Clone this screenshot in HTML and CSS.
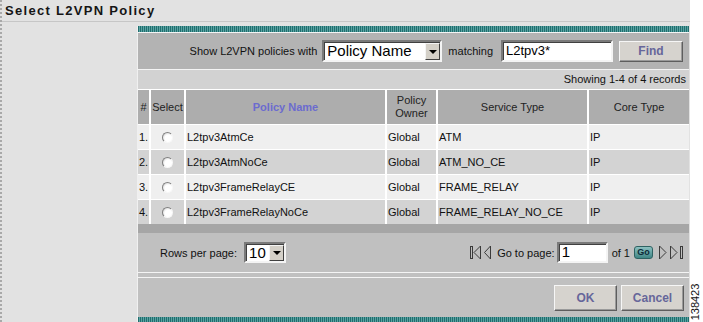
FILE: index.html
```html
<!DOCTYPE html>
<html>
<head>
<meta charset="utf-8">
<title>Select L2VPN Policy</title>
<link rel="stylesheet" href="styles.css">
</head>
<body>
<div class="page">
  <div class="title">Select L2VPN Policy</div>
  <div class="content">
    <div class="sidebar"></div>
    <div class="panel">
      <div class="teal"></div>
      <div class="filter">
        <span class="lbl">Show L2VPN policies with</span>
        <div class="select sel-field"><span class="sel-text">Policy Name</span><span class="sel-btn"><span class="tri"></span></span></div>
        <span class="lbl match">matching</span>
        <div class="input in-match">L2tpv3*</div>
        <div class="btn btn-find">Find</div>
      </div>
      <div class="showing">Showing 1-4 of 4 records</div>
      <table class="grid">
        <colgroup>
          <col class="c-num"><col class="c-sel"><col class="c-name"><col class="c-owner"><col class="c-svc"><col class="c-core">
        </colgroup>
        <thead>
          <tr>
            <th>#</th>
            <th>Select</th>
            <th><span class="sort">Policy Name</span></th>
            <th>Policy<br>Owner</th>
            <th>Service Type</th>
            <th>Core Type</th>
          </tr>
        </thead>
        <tbody>
          <tr class="light"><td>1.</td><td class="ctr"><span class="radio"></span></td><td>L2tpv3AtmCe</td><td>Global</td><td>ATM</td><td>IP</td></tr>
          <tr class="dark"><td>2.</td><td class="ctr"><span class="radio"></span></td><td>L2tpv3AtmNoCe</td><td>Global</td><td>ATM_NO_CE</td><td>IP</td></tr>
          <tr class="light"><td>3.</td><td class="ctr"><span class="radio"></span></td><td>L2tpv3FrameRelayCE</td><td>Global</td><td>FRAME_RELAY</td><td>IP</td></tr>
          <tr class="dark"><td>4.</td><td class="ctr"><span class="radio"></span></td><td>L2tpv3FrameRelayNoCe</td><td>Global</td><td>FRAME_RELAY_NO_CE</td><td>IP</td></tr>
        </tbody>
      </table>
      <div class="grid-foot"></div>
      <div class="pager">
        <div class="rows">
          <span class="lbl">Rows per page:</span>
          <div class="select sel-rows"><span class="sel-text">10</span><span class="sel-btn"><span class="tri"></span></span></div>
        </div>
        <div class="nav">
          <svg class="ico ico-first" width="11" height="15" viewBox="0 0 11 15"><rect x="0.5" y="1.5" width="2" height="12" fill="none" stroke="#3a3a3a"/><path d="M10.5 1 L4 7.5 L10.5 14 Z" fill="none" stroke="#3a3a3a"/></svg>
          <svg class="ico ico-prev" width="7" height="15" viewBox="0 0 7 15"><path d="M6.5 1 L0.5 7.5 L6.5 14 Z" fill="none" stroke="#3a3a3a"/></svg>
          <span class="lbl goto">Go to page:</span>
          <div class="input in-page">1</div>
          <span class="lbl of">of 1</span>
          <span class="go">Go</span>
          <svg class="ico ico-next" width="8" height="15" viewBox="0 0 8 15"><path d="M0.5 1 L7 7.5 L0.5 14 Z" fill="none" stroke="#3a3a3a"/></svg>
          <svg class="ico ico-last" width="14" height="15" viewBox="0 0 14 15"><path d="M0.5 1 L7 7.5 L0.5 14 Z" fill="none" stroke="#3a3a3a"/><rect x="10.5" y="1.5" width="2" height="12" fill="none" stroke="#3a3a3a"/></svg>
        </div>
      </div>
      <div class="actions">
        <div class="btn btn-act">OK</div>
        <div class="btn btn-act">Cancel</div>
      </div>
      <div class="teal"></div>
    </div>
  </div>
</div>
<div class="fig-id">138423</div>
</body>
</html>
```
FILE: styles.css
```css
html, body {
  margin: 0;
  padding: 0;
  background: #ffffff;
  font-family: "Liberation Sans", Arial, sans-serif;
  color: #111;
}
.page {
  width: 688px;
  height: 322px;
  overflow: hidden;
  border-left: 2px dotted #a9a9a9;
  background: #e2e2e2;
}
.title {
  height: 19px;
  padding: 2px 0 0 3px;
  border-bottom: 1px solid #c6c6c6;
  font-size: 13px;
  font-weight: bold;
  letter-spacing: 1.3px;
  line-height: 18px;
  color: #151515;
  box-sizing: content-box;
}
.content {
  display: flex;
  padding-top: 4px;
}
.sidebar {
  width: 135px;
  flex: none;
}
.panel {
  width: 551px;
  flex: none;
  border-left: 1px solid #f0f0f0;
  background: #c0c0c0;
}
.teal {
  height: 6px;
  background: repeating-linear-gradient(90deg, #1f6e6e 0 1px, #5aa2a2 1px 2px);
}
.filter {
  height: 36px;
  border-top: 1px solid #f4f4f4;
  border-bottom: 1px solid #f4f4f4;
  background: #b3b3b3;
  display: flex;
  align-items: center;
  justify-content: flex-end;
  padding-right: 6px;
}
.lbl {
  font-size: 11px;
  color: #111;
  white-space: nowrap;
}
.select {
  position: relative;
  display: flex;
  align-items: center;
  background: #fff;
  border: 2px solid;
  border-color: #7a7a7a #f4f4f4 #f4f4f4 #7a7a7a;
  box-sizing: border-box;
  box-shadow: inset 1px 1px 0 #404040;
}
.sel-text {
  flex: 1;
  font-size: 15px;
  padding-left: 3px;
  color: #000;
  line-height: 16px;
}
.sel-btn {
  width: 15px;
  align-self: stretch;
  margin: 1px 0 0 0;
  background: #d4d0c8;
  border: 1px solid;
  border-color: #f4f4f4 #404040 #404040 #f4f4f4;
  box-sizing: border-box;
  display: flex;
  align-items: center;
  justify-content: center;
}
.tri {
  width: 0;
  height: 0;
  border-left: 4px solid transparent;
  border-right: 4px solid transparent;
  border-top: 4px solid #000;
}
.sel-field {
  width: 120px;
  height: 22px;
  margin-left: 5px;
}
.match {
  margin-left: 6px;
}
.input {
  background: #fff;
  border: 2px solid;
  border-color: #7a7a7a #f4f4f4 #f4f4f4 #7a7a7a;
  box-shadow: inset 1px 1px 0 #404040;
  box-sizing: border-box;
  color: #000;
  padding-left: 3px;
}
.in-match {
  width: 112px;
  height: 22px;
  margin-left: 8px;
  font-size: 13px;
  line-height: 17px;
}
.btn {
  background: #d6d3ce;
  border: 1px solid;
  border-color: #f6f6f6 #5e5e5e #5e5e5e #f6f6f6;
  box-shadow: inset -1px -1px 0 #9a9a9a;
  box-sizing: border-box;
  color: #66669a;
  font-weight: bold;
  font-size: 12px;
  display: flex;
  align-items: center;
  justify-content: center;
}
.btn-find {
  width: 64px;
  height: 21px;
  margin-left: 6px;
}
.showing {
  height: 19px;
  line-height: 19px;
  background: #d2d2d2;
  text-align: right;
  padding-right: 3px;
  font-size: 11px;
  color: #111;
}
.grid {
  width: 551px;
  table-layout: fixed;
  border-collapse: separate;
  border-spacing: 0;
  font-size: 11px;
}
.c-num { width: 11px; }
.c-sel { width: 35px; }
.c-name { width: 201px; }
.c-owner { width: 51px; }
.c-svc { width: 151px; }
.c-core { width: 102px; }
.grid th, .grid td {
  border-top: 1px solid #fff;
  border-left: 2px solid #fff;
  padding: 0 0 0 1px;
  text-align: left;
  white-space: nowrap;
  overflow: hidden;
}
.grid th:first-child, .grid td:first-child {
  border-left: none;
  padding-left: 1px;
}
.grid th {
  height: 34px;
  background: #adadad;
  font-weight: normal;
  text-align: center;
  color: #222;
  line-height: 13px;
  padding: 0;
}
.grid th:first-child {
  padding-left: 0;
}
.sort {
  color: #6b6bcf;
  font-weight: bold;
}
.grid td {
  height: 24px;
  color: #111;
}
.light td { background: #efefef; }
.dark td { background: #d3d3d3; }
.grid td.ctr {
  text-align: center;
  padding: 0;
}
.radio {
  display: inline-block;
  width: 11px;
  height: 11px;
  border-radius: 50%;
  box-sizing: border-box;
  border: 1px solid;
  border-color: #808080 #f8f8f8 #f8f8f8 #808080;
  background: radial-gradient(circle at 60% 60%, #ffffff 0 45%, #e4e4e4 70%);
  vertical-align: middle;
  margin-top: -2px;
}
.grid-foot {
  height: 9px;
  background: #a6a6a6;
}
.pager {
  height: 39px;
  border-bottom: 1px solid #f4f4f4;
  background: #c0c0c0;
  display: flex;
  align-items: center;
  justify-content: space-between;
  padding: 0 5px 0 22px;
}
.rows {
  display: flex;
  align-items: center;
}
.sel-rows {
  width: 42px;
  height: 21px;
  margin-left: 7px;
}
.nav {
  display: flex;
  align-items: center;
}
.ico { display: block; }
.ico-prev { margin-left: 3px; }
.goto { margin-left: 6px; }
.in-page {
  width: 51px;
  height: 21px;
  margin-left: 2px;
  font-size: 15px;
  line-height: 16px;
}
.of { margin-left: 4px; }
.go {
  width: 19px;
  height: 13px;
  margin-left: 4px;
  box-sizing: border-box;
  border: 1px solid #2e6262;
  border-radius: 3px;
  background: linear-gradient(#8cc0c0, #3f8585);
  color: #0d2b38;
  font-size: 9px;
  font-weight: bold;
  line-height: 11px;
  text-align: center;
}
.ico-next { margin-left: 6px; }
.ico-last { margin-left: 3px; }
.actions {
  height: 39px;
  margin-top: 4px;
  border-top: 1px solid #f4f4f4;
  background: #c0c0c0;
  display: flex;
  align-items: center;
  justify-content: flex-end;
  padding-right: 5px;
  gap: 4px;
}
.btn-act {
  width: 63px;
  height: 26px;
}
.fig-id {
  position: absolute;
  left: 676px;
  top: 295px;
  width: 38px;
  height: 14px;
  line-height: 14px;
  font-size: 11px;
  color: #111;
  transform: rotate(-90deg);
  text-align: center;
}
```
